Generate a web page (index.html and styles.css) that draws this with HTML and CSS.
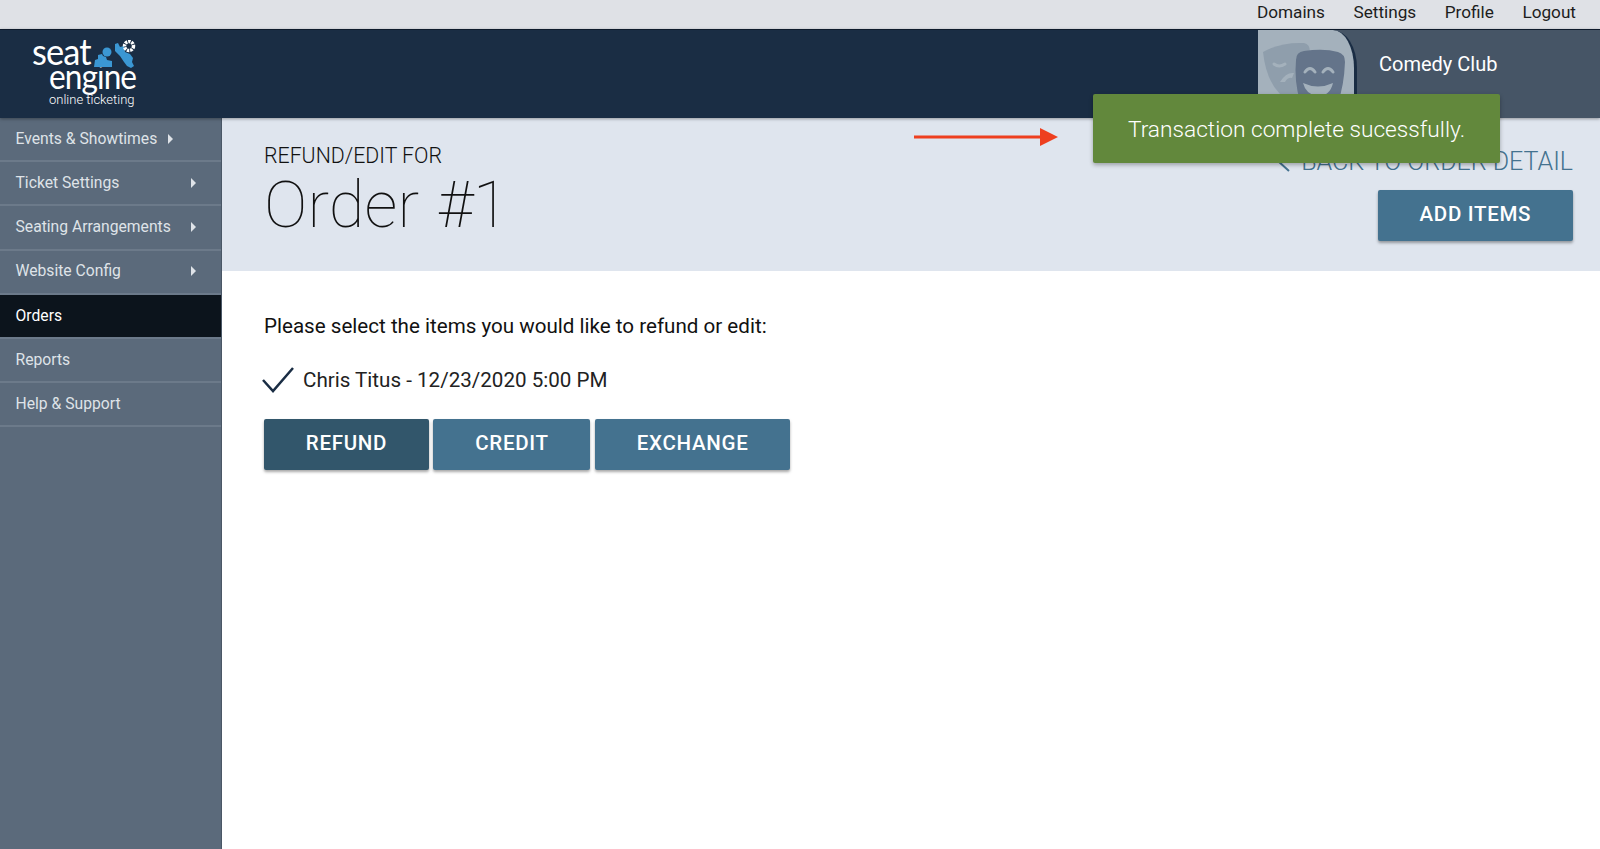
FILE: index.html
```html
<!DOCTYPE html>
<html lang="en">

<head>
    <meta charset="UTF-8" />
    <title>Refund/Edit Order</title>
    <link rel="stylesheet" href="styles.css">
</head>

<body>
    <nav class="top-nav">
        <a href="#">Domains</a>
        <a href="#">Settings</a>
        <a href="#">Profile</a>
        <a href="#">Logout</a>
    </nav>

    <header class="site-header">
        <div class="logo">
            <div class="logo-seat">seat</div>
            <div class="logo-engine">engine</div>
            <div class="logo-tag">online ticketing</div>
            <svg class="logo-gears" width="46" height="38" viewBox="0 0 46 38">
                <path fill="#3b97d3" d="M3 27 L4 20 L7 19 L7 15 L11 14 L12 16 L15 17 L16 20 L21 21 L21 27 Z" />
                <circle fill="#3b97d3" cx="16" cy="12" r="4.5" />
                <path fill="#3b97d3" d="M24 4 L27 3 L29 7 L33 6 L34 12 L39 14 L42 18 L41 22 L43 26 L40 28 L36 26 L33 22 L29 16 L24 11 Z" />
                <circle fill="none" stroke="#fff" stroke-width="3.5" stroke-dasharray="2.4 0.9" cx="38" cy="6" r="4.5" />
            </svg>
        </div>
        <div class="club">
            <div class="club-avatar">
                <svg width="92" height="88" viewBox="0 0 92 88">
                    <path fill="#8f9eac" d="M5 22 Q22 12 46 13 Q52 14 52 22 L50 64 L22 64 Q8 50 5 22 Z" />
                    <path fill="none" stroke="#a4b1bc" stroke-width="3" stroke-linecap="round" d="M16 34 Q21 38 27 34" />
                    <path fill="#a4b1bc" d="M22 52 Q28 42 36 43 L34 48 Q30 47 27 52 Z" />
                    <path fill="#64748a" d="M38 30 Q38 22 46 21 Q66 18 80 22 Q87 24 87 32 Q86 56 80 72 L42 72 Q36 50 38 30 Z" />
                    <path fill="none" stroke="#a4b1bc" stroke-width="3" stroke-linecap="round" d="M47 42 Q52 35 57 42 M65 42 Q70 35 75 42" />
                    <path fill="#a4b1bc" d="M45 53 Q60 60 75 53 Q72 66 60 66 Q48 65 45 53 Z" />
                </svg>
            </div>
            <div class="club-name">Comedy Club</div>
        </div>
    </header>

    <div class="layout">
        <aside class="sidebar">
            <a class="side-item" href="#"><span>Events &amp; Showtimes</span><i class="caret caret-near"></i></a>
            <a class="side-item" href="#"><span>Ticket Settings</span><i class="caret"></i></a>
            <a class="side-item" href="#"><span>Seating Arrangements</span><i class="caret"></i></a>
            <a class="side-item" href="#"><span>Website Config</span><i class="caret"></i></a>
            <a class="side-item active" href="#"><span>Orders</span></a>
            <a class="side-item" href="#"><span>Reports</span></a>
            <a class="side-item" href="#"><span>Help &amp; Support</span></a>
        </aside>

        <main class="content">
            <section class="page-head">
                <div>
                    <div class="eyebrow">REFUND/EDIT FOR</div>
                    <h1>Order #1</h1>
                </div>
                <div class="head-actions">
                    <a class="back-link" href="#">
                        <svg width="16" height="24" viewBox="0 0 16 24">
                            <path fill="none" stroke="#44728f" stroke-width="2" d="M14 2 L3 12 L14 22" />
                        </svg>
                        BACK TO ORDER DETAIL
                    </a>
                    <button class="btn">ADD ITEMS</button>
                </div>
            </section>

            <section class="page-body">
                <p class="prompt">Please select the items you would like to refund or edit:</p>
                <label class="check-row">
                    <svg width="32" height="26" viewBox="0 0 32 26">
                        <path fill="none" stroke="#1a2d44" stroke-width="2.5" d="M1 13 L11 24 L31 1" />
                    </svg>
                    Chris Titus - 12/23/2020 5:00 PM
                </label>
                <div class="btn-row">
                    <button class="btn btn-dark">REFUND</button>
                    <button class="btn">CREDIT</button>
                    <button class="btn">EXCHANGE</button>
                </div>
            </section>
        </main>
    </div>

    <svg class="note-arrow" width="144" height="18" viewBox="0 0 144 18">
        <path fill="#ee3f1f" d="M0 7.5 H126 V0 L144 9 L126 18 V10.5 H0 Z" />
    </svg>
    <div class="toast">Transaction complete sucessfully.</div>
</body>

</html>
```

FILE: styles.css
```css
* {
    margin: 0;
    padding: 0;
    box-sizing: border-box;
    font-family: 'Roboto', sans-serif;
}

body {
    height: 849px;
    overflow: hidden;
    display: flex;
    flex-direction: column;
    background: #fff;
    color: #111;
}

a {
    text-decoration: none;
    color: inherit;
}

.top-nav {
    height: 29px;
    flex: none;
    display: flex;
    justify-content: flex-end;
    align-items: center;
    gap: 28.5px;
    padding: 0 24px 6px 0;
    background: #dfe1e6;
    font-size: 17.2px;
    color: #1d1d1d;
}

.site-header {
    height: 89px;
    flex: none;
    display: flex;
    justify-content: space-between;
    background: #1a2d44;
    border-top: 1px solid #0e1a2b;
    box-shadow: 0 1px 3px rgba(0, 0, 0, 0.35);
    position: relative;
}

.logo {
    position: relative;
    width: 200px;
    padding: 6px 0 0 32px;
    color: #fff;
}

.logo-seat {
    font-family: 'Lato', sans-serif;
    font-size: 37px;
    line-height: 29px;
    letter-spacing: -1px;
    transform: scaleX(0.93);
    transform-origin: left;
}

.logo-engine {
    font-family: 'Lato', sans-serif;
    font-size: 34px;
    line-height: 26px;
    margin: -2px 0 0 17px;
    letter-spacing: -1px;
    transform: scaleX(0.93);
    transform-origin: left;
}

.logo-tag {
    font-size: 13px;
    line-height: 16px;
    margin: 3px 0 0 17px;
    font-weight: 300;
}

.logo-gears {
    position: absolute;
    left: 91px;
    top: 10px;
}

.club {
    width: 342px;
    display: flex;
    background: #465566;
}

.club-avatar {
    width: 99px;
    height: 88px;
    overflow: hidden;
    background: #a4b1bc;
    border-right: 3px solid #1a2d44;
    border-top-right-radius: 24px 38px;
}

.club-name {
    margin: 20px 0 0 22px;
    font-size: 20px;
    line-height: 28px;
    color: #fff;
}

.layout {
    flex: 1;
    display: flex;
    min-height: 0;
}

.sidebar {
    width: 222px;
    flex: none;
    background: #5b6a7b;
    border-right: 1px solid #4a5766;
}

.side-item {
    height: 44.2px;
    display: flex;
    justify-content: space-between;
    align-items: center;
    padding: 0 25px 1.5px 15.5px;
    font-size: 15.7px;
    color: #dfe3e8;
    border-bottom: 2px solid #6c7a8a;
}

.side-item.active {
    background: #0c141c;
    color: #fff;
}

.caret {
    width: 0;
    height: 0;
    border-left: 5px solid #dfe3e8;
    border-top: 5px solid transparent;
    border-bottom: 5px solid transparent;
}

.caret-near {
    margin-right: 23px;
    margin-top: 2px;
}

.content {
    flex: 1;
    min-width: 0;
}

.page-head {
    height: 153px;
    display: flex;
    justify-content: space-between;
    padding: 26px 27px 0 42px;
    background: #dfe5ee;
}

.eyebrow {
    font-size: 21.3px;
    line-height: 24px;
    font-weight: 300;
    color: #111;
}

h1 {
    font-size: 65px;
    line-height: 74px;
    font-weight: 100;
    color: #111;
    letter-spacing: 0.2px;
    word-spacing: 2px;
}

.head-actions {
    display: flex;
    flex-direction: column;
    align-items: flex-end;
    gap: 14px;
}

.back-link {
    display: flex;
    align-items: center;
    gap: 10px;
    height: 30px;
    margin-top: 2px;
    font-size: 25px;
    font-weight: 300;
    color: #44728f;
}

.btn {
    height: 51px;
    padding: 0 41.8px 3px;
    border: none;
    border-radius: 2px;
    background: #44728f;
    color: #fff;
    font-size: 20.5px;
    font-weight: 500;
    letter-spacing: 0.7px;
    box-shadow: 0 2px 3px rgba(0, 0, 0, 0.35);
}

.btn-dark {
    background: #32566b;
}

.page-body {
    padding: 41px 42px 0;
}

.prompt {
    font-size: 20.6px;
    line-height: 28px;
    color: #111;
}

.check-row {
    display: flex;
    align-items: center;
    gap: 9px;
    margin-top: 24px;
    margin-left: -2px;
    height: 32px;
    font-size: 20.6px;
    color: #222;
}

.btn-row {
    display: flex;
    gap: 4.5px;
    margin-top: 23px;
}

.note-arrow {
    position: absolute;
    left: 914px;
    top: 128px;
}

.toast {
    position: absolute;
    left: 1093px;
    top: 94px;
    width: 407px;
    height: 69px;
    display: flex;
    justify-content: center;
    align-items: center;
    padding-top: 1px;
    background: #62883c;
    border-radius: 2px;
    color: #fff;
    font-size: 22.7px;
    font-weight: 300;
    box-shadow: 0 2px 4px rgba(0, 0, 0, 0.3);
}
```
